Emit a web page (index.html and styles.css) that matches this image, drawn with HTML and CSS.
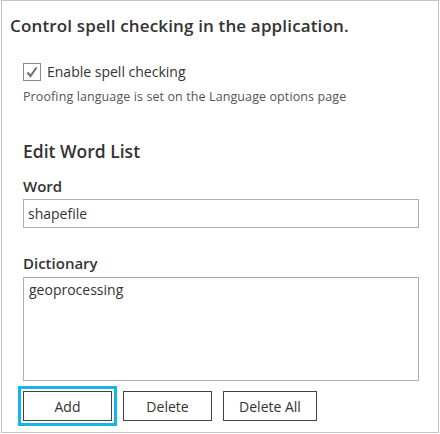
FILE: index.html
```html
<!DOCTYPE html>
<html>
<head>
<meta charset="utf-8">
<link rel="stylesheet" href="styles.css">
</head>
<body>
<div class="panel">
  <div class="title">Control spell checking in the application.</div>
  <div class="section">
    <label class="check-row">
      <span class="checkbox">
        <svg width="16" height="16" viewBox="0 0 16 16"><polyline points="3.5,8.5 6.5,12 12.5,3.5" fill="none" stroke="#6e6e6e" stroke-width="2"/></svg>
      </span>
      <span class="check-label">Enable spell checking</span>
    </label>
    <div class="hint">Proofing language is set on the Language options page</div>
    <div class="heading">Edit Word List</div>
    <div class="label">Word</div>
    <div class="input">shapefile</div>
    <div class="label label-dict">Dictionary</div>
    <div class="textarea">geoprocessing</div>
    <div class="buttons">
      <button class="btn btn-focus">Add</button>
      <button class="btn">Delete</button>
      <button class="btn btn-wide">Delete All</button>
    </div>
  </div>
</div>
</body>
</html>
```
FILE: styles.css
```css
html, body {
  margin: 0;
  padding: 0;
  background: #ffffff;
}
body {
  font-family: "Open Sans", "Noto Sans", sans-serif;
  color: #333333;
}
.panel {
  margin-left: 1px;
  width: 438px;
  height: 433px;
  box-sizing: border-box;
  border: 1px solid #c4c4c4;
  padding-top: 15px;
}
.title {
  margin-left: 8px;
  font-size: 17px;
  line-height: 20px;
  font-weight: 600;
  letter-spacing: 0.15px;
  color: #333333;
}
.section {
  padding-left: 21px;
  display: flex;
  flex-direction: column;
  align-items: flex-start;
}
.check-row {
  margin-top: 27px;
  display: flex;
  align-items: center;
  height: 18px;
}
.checkbox {
  width: 18px;
  height: 18px;
  box-sizing: border-box;
  border: 1px solid #8a8a8a;
  display: flex;
  align-items: center;
  justify-content: center;
}
.check-label {
  margin-left: 6px;
  font-size: 14px;
  line-height: 18px;
  color: #333333;
}
.hint {
  margin-top: 8px;
  font-size: 12.5px;
  line-height: 16px;
  letter-spacing: 0.1px;
  color: #555555;
}
.heading {
  margin-top: 34px;
  font-size: 17.5px;
  line-height: 24px;
  font-weight: 600;
  color: #333333;
}
.label {
  margin-top: 13px;
  font-size: 15px;
  line-height: 20px;
  font-weight: 600;
  color: #333333;
}
.label-dict {
  margin-top: 25px;
}
.input {
  margin-top: 3px;
  width: 396px;
  height: 29px;
  box-sizing: border-box;
  border: 1px solid #adadad;
  padding-left: 4px;
  font-size: 14px;
  line-height: 27px;
  color: #333333;
}
.textarea {
  margin-top: 4px;
  width: 396px;
  height: 104px;
  box-sizing: border-box;
  border: 1px solid #adadad;
  padding: 2px 5px;
  font-size: 14px;
  line-height: 20px;
  color: #333333;
}
.buttons {
  margin-top: 10px;
  display: flex;
  gap: 11px;
}
.btn {
  width: 89px;
  height: 30px;
  box-sizing: border-box;
  border: 1px solid #444444;
  background: #ffffff;
  font-family: "Open Sans", "Noto Sans", sans-serif;
  font-size: 14px;
  color: #333333;
  padding: 0;
}
.btn-wide {
  width: 94px;
}
.btn-focus {
  outline: 3px solid #15b5e8;
  outline-offset: 2px;
}
```
